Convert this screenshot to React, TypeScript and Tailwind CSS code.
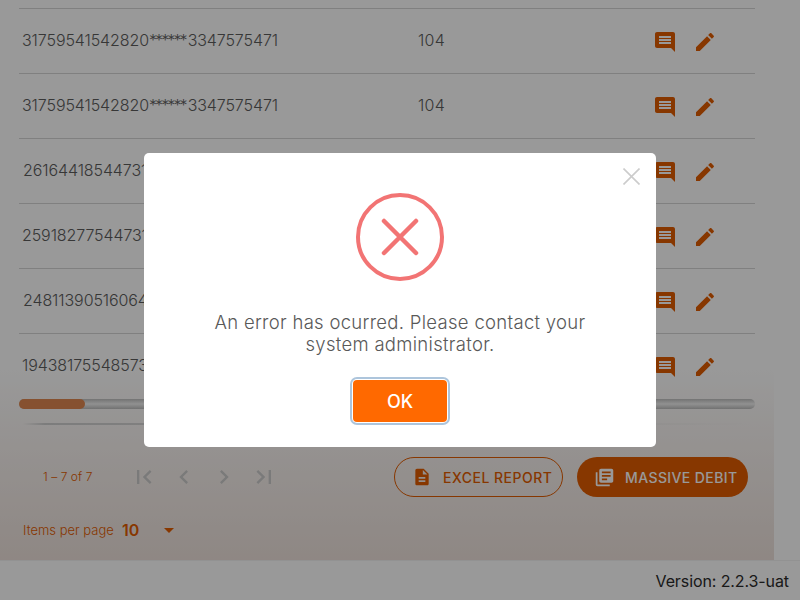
import React from 'react';

const font = { fontFamily: 'Inter, "Noto Sans", sans-serif' };

const rows = [
  { head: '31759541542820', tail: '3347575471', amount: '104', indent: 'pl-[3px]' },
  { head: '31759541542820', tail: '3347575471', amount: '104', indent: 'pl-[3px]' },
  { head: '26164418544731', tail: '3347575471', amount: '104', indent: 'pl-[4px]' },
  { head: '25918277544731', tail: '3347575471', amount: '104', indent: 'pl-[3px]' },
  { head: '24811390516064', tail: '3347575471', amount: '104', indent: 'pl-[4px]' },
  { head: '19438175548573', tail: '3347575471', amount: '104', indent: 'pl-[3px]' },
];

const Icon: React.FC<{ d: string; className?: string }> = ({ d, className }) => (
  <svg viewBox="0 0 24 24" fill="currentColor" className={className}>
    <path d={d} />
  </svg>
);

const COMMENT = 'M21.99 4c0-1.1-.89-2-1.99-2H4c-1.1 0-2 .9-2 2v12c0 1.1.9 2 2 2h14l4 4-.01-18zM18 14H6v-2h12v2zm0-3H6V9h12v2zm0-3H6V6h12v2z';
const EDIT = 'M3 17.25V21h3.75L17.81 9.94l-3.75-3.75L3 17.25zM20.71 7.04c.39-.39.39-1.02 0-1.41l-2.34-2.34c-.39-.39-1.02-.39-1.41 0l-1.83 1.83 3.75 3.75 1.83-1.83z';
const DESCRIPTION = 'M14 2H6c-1.1 0-1.99.9-1.99 2L4 20c0 1.1.89 2 1.99 2H18c1.1 0 2-.9 2-2V8l-6-6zm2 16H8v-2h8v2zm0-4H8v-2h8v2zm-3-5V3.5L18.5 9H13z';
const LIBRARY = 'M4 6H2v14c0 1.1.9 2 2 2h14v-2H4V6zm16-4H8c-1.1 0-2 .9-2 2v12c0 1.1.9 2 2 2h12c1.1 0 2-.9 2-2V4c0-1.1-.9-2-2-2zm-1 9H9V9h10v2zm-4 4H9v-2h6v2zm4-8H9V5h10v2z';
const pager = [
  'M18.41 16.59L13.82 12l4.59-4.59L17 6l-6 6 6 6zM6 6h2v12H6z',
  'M15.41 7.41L14 6l-6 6 6 6 1.41-1.41L10.83 12z',
  'M10 6L8.59 7.41 13.17 12l-4.58 4.59L10 18l6-6z',
  'M5.59 7.41L10.18 12l-4.59 4.59L7 18l6-6-6-6zM16 6h2v12h-2z',
];

export default function App() {
  return (
    <div className="relative h-[600px] w-[800px] overflow-hidden bg-white" style={font}>
      <div className="flex h-[560px] w-[774px] flex-col bg-gradient-to-b from-white from-[66%] to-[#eee2dc] pl-[19px] pr-[19px] pt-[8px]">
        {/* table rows */}
        <div className="flex flex-col">
          {rows.map((r, i) => (
            <div key={i} className="flex h-[65px] items-center border-t border-[#d5d5d5] text-[16px] font-light text-[#5c5c5c]">
              <span className={`w-[399px] shrink-0 pb-[2px] tracking-[-0.1px] ${r.indent}`}>
                {r.head}
                <span className="tracking-[-1.9px]">******</span>
                <span className="ml-[2px]">{r.tail}</span>
              </span>
              <span className="w-[235px] shrink-0 pb-[2px] tracking-[0.3px]">{r.amount}</span>
              <div className="flex items-center gap-[16px] pt-[2px] text-[#e25c00]">
                <Icon d={COMMENT} className="h-[24px] w-[24px]" />
                <Icon d={EDIT} className="h-[24px] w-[24px]" />
              </div>
            </div>
          ))}
        </div>

        {/* horizontal scrollbar */}
        <div className="relative mt-[1px] h-[10px] w-[736px] rounded-full bg-gradient-to-b from-[#c0c0c0] via-[#f2f2f2] to-[#bdbdbd]">
          <div className="h-[10px] w-[66px] rounded-full bg-[#e08850]" />
        </div>
        <div className="ml-[4px] mt-[14px] h-[2px] w-[728px] bg-gradient-to-r from-transparent via-[#cfcfcf] via-[3%] to-transparent" />

        {/* pagination + actions */}
        <div className="mt-[32px] flex h-[40px] items-center">
          <span className="ml-[24px] w-[81px] shrink-0 text-[12px] font-light tracking-[0.05px] text-[#e25c00]">1 – 7 of 7</span>
          <div className="flex text-[#cbcbcb]">
            {pager.map((d) => (
              <span key={d} className="flex h-[40px] w-[40px] items-center justify-center">
                <Icon d={d} className="h-[28px] w-[28px]" />
              </span>
            ))}
          </div>
          <button className="ml-[110px] flex h-[40px] w-[169px] items-center rounded-full border border-[#e25c00] pl-[17px] text-[14px] font-medium tracking-[0.5px] text-[#e25c00]">
            <Icon d={DESCRIPTION} className="h-[20px] w-[20px]" />
            <span className="ml-[11px]">EXCEL REPORT</span>
          </button>
          <button className="ml-[14px] flex h-[40px] w-[171px] items-center rounded-full bg-[#e25c00] pl-[17px] text-[14px] font-medium tracking-[0.4px] text-white">
            <Icon d={LIBRARY} className="h-[21px] w-[21px]" />
            <span className="ml-[10px]">MASSIVE DEBIT</span>
          </button>
        </div>

        <div className="mt-[13px] flex h-[40px] items-center pl-[4px] text-[#e25c00]">
          <span className="w-[99px] pt-[2px] text-[13px] font-light">Items per page</span>
          <span className="w-[42px] text-[16px] font-semibold">10</span>
          <span className="h-0 w-0 border-x-[5px] border-t-[5px] border-x-transparent border-t-[#e25c00]" />
        </div>
      </div>

      <div className="flex h-[40px] items-center justify-end border-t border-[#f4f4f4] bg-white pr-[11px] text-[16px] font-normal tracking-[-0.1px] text-[#2b2b2b]">
        Version: 2.2.3-uat
      </div>

      {/* error dialog */}
      <div className="fixed inset-0 flex items-center justify-center bg-[rgba(0,0,0,0.4)]">
        <div className="relative flex h-[294px] w-[512px] flex-col items-center rounded-[5px] bg-white pt-[40px]">
          <button className="absolute right-[16px] top-[15px] text-[#cccccc]">
            <svg viewBox="0 0 17 17" className="h-[17px] w-[17px]" stroke="currentColor" strokeWidth="1.6">
              <path d="M0.5 0.5L16.5 16.5M16.5 0.5L0.5 16.5" />
            </svg>
          </button>
          <svg viewBox="0 0 88 88" className="h-[88px] w-[88px]" fill="none" stroke="#f27474">
            <circle cx="44" cy="44" r="42" strokeWidth="4" />
            <path d="M28 28L60 60M60 28L28 60" strokeWidth="4.5" strokeLinecap="round" />
          </svg>
          <p className="mt-[30px] w-[400px] text-center text-[18.5px] font-light leading-[22px] tracking-[0.3px] text-[#595959]">
            An error has ocurred. Please contact your system administrator.
          </p>
          <button className="mt-[25px] h-[42px] w-[94px] rounded-[4px] bg-[#ff6900] text-[18px] font-medium text-white shadow-[0_0_0_1px_#fff,0_0_0_3px_#adc5dc]">
            OK
          </button>
        </div>
      </div>
    </div>
  );
}
